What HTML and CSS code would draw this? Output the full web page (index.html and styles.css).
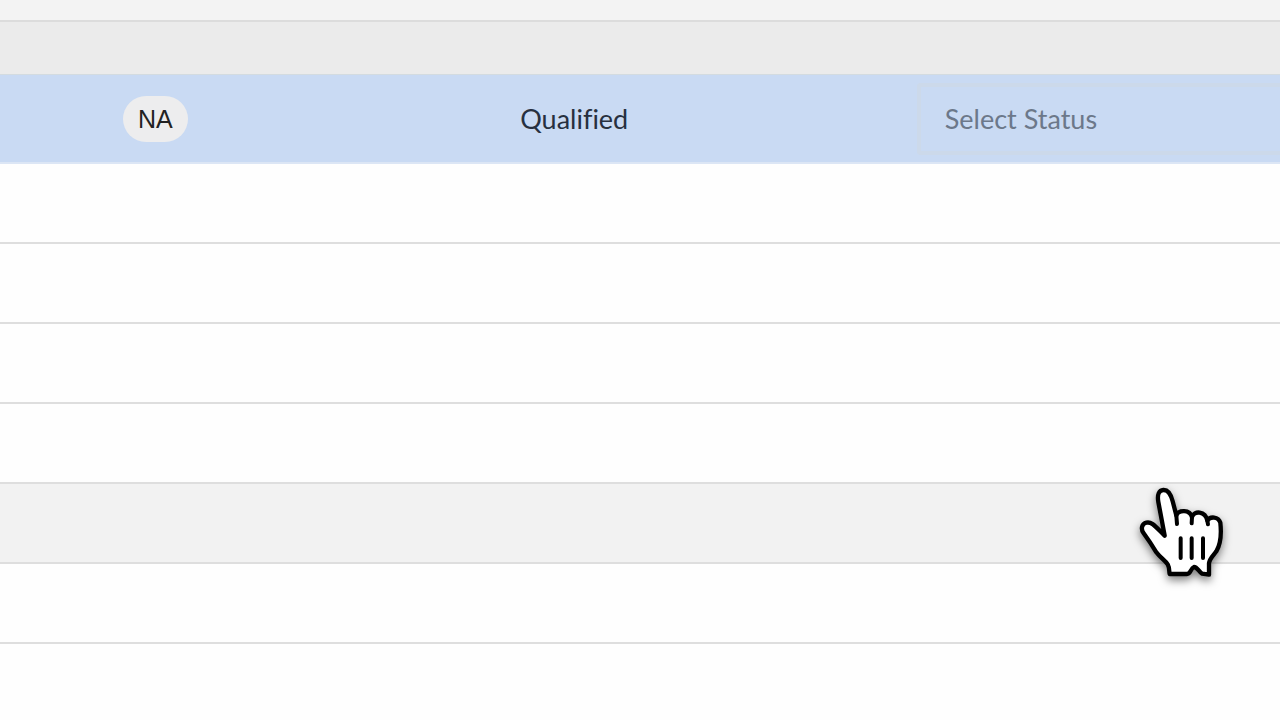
FILE: index.html
```html
<!DOCTYPE html>
<html lang="en">
<head>
    <meta charset="UTF-8">
    <meta name="viewport" content="width=device-width, initial-scale=1.0">
    <title>Lead Status</title>
    <link rel="stylesheet" href="styles.css">
</head>
<body>
    <table class="sheet">
        <colgroup>
            <col class="col-tag">
            <col class="col-stage">
            <col class="col-status">
        </colgroup>
        <thead>
            <tr class="row-top"><td></td><td></td><td></td></tr>
            <tr class="row-head"><td></td><td></td><td></td></tr>
        </thead>
        <tbody>
            <tr class="row-selected">
                <td class="cell-tag"><span class="tag">NA</span></td>
                <td class="cell-stage">Qualified</td>
                <td class="cell-status">
                    <select class="status-select" aria-label="Status">
                        <option>Select Status</option>
                        <option>Qualified</option>
                    </select>
                </td>
            </tr>
            <tr><td></td><td></td><td></td></tr>
            <tr><td></td><td></td><td></td></tr>
            <tr><td></td><td></td><td></td></tr>
            <tr><td></td><td></td><td></td></tr>
            <tr class="row-hover"><td></td><td></td><td></td></tr>
            <tr><td></td><td></td><td></td></tr>
            <tr><td></td><td></td><td></td></tr>
        </tbody>
    </table>

    <svg class="pointer" viewBox="0 0 390 390" aria-hidden="true">
        <path class="hand" d="M134 197 L115 96 C111 73 117 61 130 60 C145 59 153 74 158 94 L169 136 C176 119 209 118 216 141 C222 121 256 122 262 152 C270 138 295 139 301 158 C305 195 302 222 289 244 C280 257 269 264 267 280 L267 314 L246 311 C237 306 232 291 222 291 C211 295 213 312 201 312 L149 312 C147 304 149 294 143 283 C136 272 120 262 109 247 C95 224 82 205 71 190 C61 176 66 161 79 158 C95 154 105 168 134 197 Z"/>
        <path class="crease" d="M169 136 L171 162 M216 141 L215 160 M262 152 L264 163"/>
        <path class="line" d="M182 205 V264 M215 205 V264 M249 205 V264"/>
    </svg>
</body>
</html>
```

FILE: styles.css
```css
* {
    margin: 0;
    padding: 0;
    box-sizing: border-box;
}

body {
    font-family: Lato, "Liberation Sans", sans-serif;
    font-size: 27px;
    color: #27303f;
    background: #fefefe;
    position: relative;
    min-height: 100vh;
    overflow: hidden;
}

.sheet {
    width: 100%;
    table-layout: fixed;
    border-collapse: separate;
    border-spacing: 0;
}

.col-tag {
    width: 39%;
}

.col-stage {
    width: 32%;
}

.sheet td {
    height: 80px;
    border-bottom: 2px solid #dedede;
    text-align: left;
    vertical-align: middle;
}

.sheet tbody tr:last-child td {
    border-bottom: none;
}

.sheet .row-top td {
    height: 22px;
    background: #f3f3f3;
    border-bottom-color: #dcdcdc;
}

.sheet .row-head td {
    height: 53px;
    background: #ebebeb;
    border-bottom: 1px solid #d3dbe0;
}

.sheet .row-selected td {
    height: 89px;
    background: #c9daf3;
    border-bottom: 2px solid #dce6f5;
}

.sheet .row-hover td {
    background: #f2f2f2;
}

.cell-tag {
    padding-left: 123px;
}

.tag {
    display: inline-block;
    padding: 0 15px;
    border-radius: 23px;
    background: #ededee;
    color: #222;
    font-family: "Liberation Sans", Arial, sans-serif;
    font-size: 25px;
    line-height: 46px;
}

.cell-stage {
    padding-left: 21px;
    font-variant-ligatures: none;
}

.cell-status {
    padding-left: 8px;
}

/* the box runs on past the right edge of the view */
.status-select {
    display: block;
    width: 100%;
    height: 72px;
    padding-left: 24px;
    appearance: none;
    border: 4px solid #ccd9ea;
    border-right: none;
    border-radius: 4px 0 0 4px;
    background: transparent;
    color: #6c788a;
    font: inherit;
}

.pointer {
    position: absolute;
    top: 470px;
    right: 30px;
    width: 130px;
    height: 130px;
    overflow: visible;
    filter: drop-shadow(0 4px 4px rgba(0, 0, 0, 0.5));
}

.hand {
    fill: #fff;
    stroke: #000;
    stroke-width: 13;
    stroke-linejoin: round;
}

.crease,
.line {
    fill: none;
    stroke: #000;
    stroke-width: 12;
    stroke-linecap: round;
}
```
